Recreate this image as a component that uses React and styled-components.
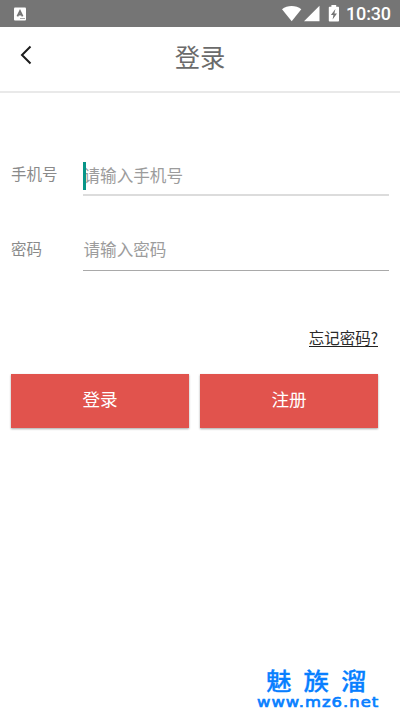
import React from 'react';
import styled, { createGlobalStyle } from 'styled-components';

const Global = createGlobalStyle`
  * { box-sizing: border-box; }
  body { margin: 0; background: #fff; font-family: "Noto Sans CJK SC", sans-serif; }
  button, input { font-family: inherit; }
`;
const Screen = styled.div`
  width: 400px; height: 710px; background: #fff; overflow: hidden;
  display: flex; flex-direction: column;
`;
const StatusBar = styled.div`
  height: 27px; flex: none; background: #757575; color: #fff;
  display: flex; align-items: center; padding: 0 9px 0 14px;
`;
const StatusIcons = styled.div`
  display: flex; align-items: center; margin-left: auto;
  svg { display: block; }
`;
const Clock = styled.span`
  width: 45px; margin-left: 6px; font: 500 18px/26px Roboto, sans-serif;
  letter-spacing: -0.15px; white-space: nowrap;
`;
const Header = styled.header`
  height: 66px; flex: none; border-bottom: 2px solid #e9e9e9;
  display: grid; grid-template-columns: 52px 1fr 52px; align-items: center;
`;
const Back = styled.button`
  border: 0; padding: 0 0 8px 20px; background: none; display: flex;
`;
const Title = styled.h1`
  margin: 0; padding-bottom: 6px; text-align: center; color: #6b6b6b;
  font-size: 25.3px; line-height: 36px; font-weight: 400;
`;
const Form = styled.main`
  padding: 66px 11px 0; display: flex; flex-direction: column;
`;
const Field = styled.label`
  display: grid; grid-template-columns: 72px 1fr; height: 37px;
  margin-bottom: ${p => p.$gap}px;
`;
const Label = styled.span`
  color: #8a8a8a; font-size: 15.5px; line-height: 29px;
`;
const Entry = styled.span`
  display: flex; align-items: flex-start; position: relative;
  border-bottom: ${p => (p.$active ? '2px solid #dcdcdc' : '1px solid #a9a9a9')};
  color: #9c9c9c; font-size: 16.6px; line-height: ${p => (p.$active ? 33 : 31)}px; padding-left: 0.5px;
`;
const Caret = styled.i`
  position: absolute; left: 0; top: 3px; width: 3px; height: 28px; background: #079587;
`;
const Forgot = styled.a`
  align-self: flex-end; margin: 0 11px 0 0; color: #2a2a2a;
  font-size: 15.5px; line-height: 23px; height: 24px;
  span { display: block; height: 21px; border-bottom: 1px solid #222; }
`;
const Actions = styled.div`
  display: grid; grid-template-columns: 178px 178px; gap: 11px; margin-top: 24px;
`;
const Action = styled.button`
  height: 54px; border: 0; padding: 0 0 5px; background: #e1534d; color: #fff;
  font-size: 17.6px; box-shadow: 0 1px 2px rgba(0, 0, 0, 0.35);
`;
const Brand = styled.footer`
  margin-top: auto; align-self: flex-end; width: 143px; height: 42px;
  color: #087fff; display: flex; flex-direction: column;
`;
const BrandName = styled.div`
  padding-left: 9px; font-size: 25.5px; line-height: 26px; font-weight: 500;
  letter-spacing: 12px; white-space: nowrap; height: 26px;
  transform: scaleY(0.93); transform-origin: top; -webkit-text-stroke: 0.3px #087fff;
`;
const BrandSite = styled.div`
  width: 112px; font: 400 14.5px/16px "DejaVu Sans", sans-serif; white-space: nowrap;
  letter-spacing: 0.9px; transform: scaleX(1.13); transform-origin: left;
  -webkit-text-stroke: 0.7px #087fff;
`;

export default function App() {
  return (
    <Screen>
      <Global />
      <StatusBar>
        <svg width="12" height="14" viewBox="0 0 12 14">
          <rect y="0.5" width="12" height="13" rx="1" fill="#fff" />
          <path d="M3.4 9.3 6 4 8.6 9.3M4.4 7.7h3.2" fill="none" stroke="#757575" strokeWidth="1.8" />
          <path d="M6 11.5h5" stroke="#aaa" strokeWidth="1" />
        </svg>
        <StatusIcons>
          <svg width="58" height="18" viewBox="0 0 58 18" fill="#fff">
            <path d="M0 4.2C5.3-.2 14-.2 19.3 4.2L9.7 16.2Z" />
            <path d="M37.5.8V16.2H22Z" />
            <path d="M49.4 0h4.8v1.7h1.8c.6 0 1 .4 1 1V15.5c0 .6-.4 1-1 1h-8.2c-.6 0-1-.4-1-1V2.7c0-.6.4-1 1-1h1.6Z" />
            <path d="M53.4 4 48.9 10h2.5L50.6 14.5 55 8.5h-2.6Z" fill="#757575" />
          </svg>
          <Clock>10:30</Clock>
        </StatusIcons>
      </StatusBar>
      <Header>
        <Back aria-label="返回">
          <svg width="12" height="20" viewBox="0 0 12 20">
            <path d="M10.5 1.5 2 10l8.5 8.5" fill="none" stroke="#1c1c1c" strokeWidth="2" />
          </svg>
        </Back>
        <Title>登录</Title>
      </Header>
      <Form>
        <Field $gap={38}>
          <Label>手机号</Label>
          <Entry $active><Caret />请输入手机号</Entry>
        </Field>
        <Field $gap={55}>
          <Label>密码</Label>
          <Entry>请输入密码</Entry>
        </Field>
        <Forgot><span>忘记密码?</span></Forgot>
        <Actions>
          <Action>登录</Action>
          <Action>注册</Action>
        </Actions>
      </Form>
      <Brand>
        <BrandName>魅族溜</BrandName>
        <BrandSite>www.mz6.net</BrandSite>
      </Brand>
    </Screen>
  );
}
